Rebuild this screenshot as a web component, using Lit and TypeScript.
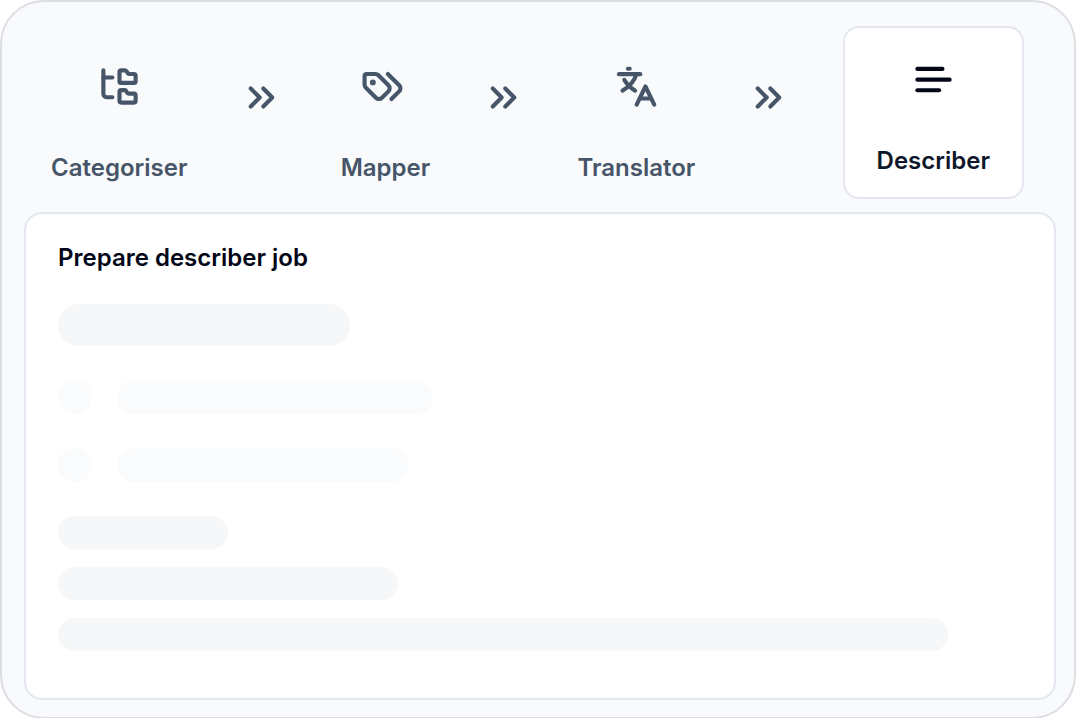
import { LitElement, html, css, svg } from "lit";
import { customElement, property, state } from "lit/decorators.js";

const icons: Record<string, unknown> = {
  categoriser: svg`
    <path d="M20 10a1 1 0 0 0 1-1V6a1 1 0 0 0-1-1h-2.5a1 1 0 0 1-.8-.4l-.9-1.2A1 1 0 0 0 15 3h-2a1 1 0 0 0-1 1v5a1 1 0 0 0 1 1Z"/>
    <path d="M20 21a1 1 0 0 0 1-1v-3a1 1 0 0 0-1-1h-2.9a1 1 0 0 1-.88-.55l-.42-.85a1 1 0 0 0-.92-.6H13a1 1 0 0 0-1 1v5a1 1 0 0 0 1 1Z"/>
    <path d="M3 7h5"/>
    <path d="M3 3v13a2 2 0 0 0 2 2h3"/>`,
  mapper: svg`
    <path d="M8.2 5H3a1 1 0 0 0-1 1v5.2a2 2 0 0 0 .6 1.4l5.7 5.7a2.4 2.4 0 0 0 3.4 0l3.6-3.6a2.4 2.4 0 0 0 0-3.4L9.6 5.6A2 2 0 0 0 8.2 5Z"/>
    <circle cx="6.6" cy="9.7" r="0.9" stroke-width="1.5"/>
    <path d="m15 5 6.3 6.3a2.4 2.4 0 0 1 0 3.4L17 19"/>`,
  translator: svg`
    <path d="M7.2 2.1h1"/>
    <path d="M2.2 5.1h11.9"/>
    <path d="M11.8 5.6c-.9 3.2-4 6.8-7.6 8.7"/>
    <path d="M5.2 8.3c1.3 2.2 3.3 4.4 6 6"/>
    <path d="m12.1 22.1 4.9-10.1 4.9 10.1"/>
    <path d="M13.9 18.7h6.2"/>`,
  describer: svg`
    <path d="M17 6.1H3"/>
    <path d="M21 12.1H3"/>
    <path d="M15.1 18H3"/>`,
  next: svg`
    <path d="m6 17 5-5-5-5"/>
    <path d="m13 17 5-5-5-5"/>`,
};

@customElement("line-icon")
export class LineIcon extends LitElement {
  @property() name = "next";

  static styles = css`
    :host {
      display: block;
      flex: none;
      width: 43px;
      height: 43px;
    }
    .glyph {
      display: block;
      width: 100%;
      height: 100%;
      overflow: visible;
      fill: none;
      stroke: currentColor;
      stroke-width: 2.3;
      stroke-linecap: round;
      stroke-linejoin: round;
    }
  `;

  render() {
    return html`<svg class="glyph" viewBox="0 0 24 24" aria-hidden="true">${icons[this.name]}</svg>`;
  }
}

const steps = [
  { id: "categoriser", label: "Categoriser" },
  { id: "mapper", label: " Mapper" },
  { id: "translator", label: "Translator" },
  { id: "describer", label: "Describer" },
];

@customElement("app-root")
export class AppRoot extends LitElement {
  @state() private active = "describer";

  static styles = css`
    :host {
      display: block;
      font-family: Inter, "Liberation Sans", sans-serif;
      color: #020617;
    }
    .shell {
      box-sizing: border-box;
      padding: 24px 18px 17px 22px;
      background: #f9fafc;
      border: 2px solid #dcdee3;
      border-radius: 44px;
    }
    .steps {
      display: flex;
      align-items: flex-start;
      justify-content: space-between;
      padding: 0 32px 0 27px;
      margin-bottom: 13px;
    }
    .step {
      display: flex;
      flex-direction: column;
      align-items: center;
      gap: 43px;
      padding: 39px 0 0;
      border: 0;
      background: none;
      color: #475569;
      font: inherit;
      cursor: pointer;
    }
    .step.active {
      padding: 30px 32px 19px;
      border: 2px solid #e4e7ee;
      border-radius: 16px;
      background: #fff;
      color: #020617;
    }
    .label {
      font-size: 24px;
      font-weight: 600;
      line-height: 34px;
      white-space: pre;
    }
    .active .label {
      color: #0f172a;
    }
    .arrow {
      padding-top: 50px;
      color: #475569;
    }
    .panel {
      display: flex;
      flex-direction: column;
      gap: 34px;
      padding: 27px 32px 47px;
      border: 2px solid #e4e7ee;
      border-radius: 18px;
      background: #fff;
    }
    .title {
      margin: 0 0 -5px;
      font-size: 24px;
      font-weight: 600;
      line-height: 34px;
    }
    .row {
      display: flex;
      gap: 25px;
    }
    .lines {
      display: flex;
      flex-direction: column;
      gap: 18px;
    }
    .bone {
      max-width: 100%;
      height: 34px;
      border-radius: 17px;
      background: #f5f7f8;
    }
    .lines .bone {
      height: 33px;
    }
    .soft {
      background: #f9fbfd;
    }
    .tall {
      height: 42px;
      border-radius: 21px;
    }
    .w-dot { width: 34px; }
    .w-xs { width: 170px; }
    .w-sm { width: 292px; }
    .w-md { width: 316px; }
    .w-lg { width: 340px; }
    .w-xl { width: 890px; }
  `;

  render() {
    return html`
      <main class="shell">
        <nav class="steps">
          ${steps.map(
            (step, i) => html`
              ${i ? html`<line-icon class="arrow" name="next"></line-icon>` : ""}
              <button
                type="button"
                class="step ${step.id === this.active ? "active" : ""}"
                @click=${() => (this.active = step.id)}
              >
                <line-icon name=${step.id}></line-icon>
                <span class="label">${step.label}</span>
              </button>
            `
          )}
        </nav>
        <section class="panel">
          <h2 class="title">Prepare describer job</h2>
          <div class="bone tall w-sm"></div>
          <div class="row">
            <div class="bone soft w-dot"></div>
            <div class="bone soft w-md"></div>
          </div>
          <div class="row">
            <div class="bone soft w-dot"></div>
            <div class="bone soft w-sm"></div>
          </div>
          <div class="lines">
            <div class="bone w-xs"></div>
            <div class="bone w-lg"></div>
            <div class="bone w-xl"></div>
          </div>
        </section>
      </main>
    `;
  }
}
